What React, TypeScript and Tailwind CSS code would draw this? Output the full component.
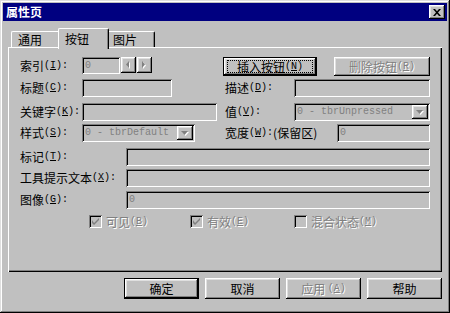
import React from "react";

const RAISED =
  "shadow-[inset_-1px_-1px_0_#000,inset_1px_1px_0_#fff,inset_-2px_-2px_0_#808080,inset_2px_2px_0_#dfdfdf]";
const SUNKEN =
  "shadow-[inset_1px_1px_0_#808080,inset_-1px_-1px_0_#fff,inset_2px_2px_0_#000,inset_-2px_-2px_0_#c0c0c0]";
const DIS = "text-[#808080] [text-shadow:1px_1px_0_#fff]";
const MONO = "font-['Liberation_Mono',monospace] text-[10px]";

function Lbl({ t, k, tail = ":", cls = "" }: { t: string; k: string; tail?: string; cls?: string }) {
  return (
    <span className={`whitespace-nowrap flex items-center ${cls}`}>
      <span>{t}</span>
      <span className={MONO}>
        (<u>{k}</u>){tail}
      </span>
    </span>
  );
}

function Field({ cls, value }: { cls: string; value?: string }) {
  return (
    <div className={`${cls} ${SUNKEN} bg-[#c0c0c0] flex items-center pl-[3px] shrink-0`}>
      {value && <span className={`${MONO} text-[#808080]`}>{value}</span>}
    </div>
  );
}

function DownArrow() {
  return (
    <svg width="8" height="5" viewBox="0 0 8 5">
      <polygon points="1,1 8,1 4.5,5" fill="#fff" />
      <polygon points="0,0 7,0 3.5,4" fill="#808080" />
    </svg>
  );
}

function Combo({ cls, value }: { cls: string; value: string }) {
  return (
    <div className={`${cls} h-[18px] ${SUNKEN} bg-[#c0c0c0] flex items-center pl-[3px] pr-[2px] shrink-0`}>
      <span className={`flex-1 ${MONO} text-[#808080]`}>{value}</span>
      <div className={`w-[16px] h-[14px] ${RAISED} bg-[#c0c0c0] flex items-center justify-center`}>
        <DownArrow />
      </div>
    </div>
  );
}

function Check({ checked }: { checked?: boolean }) {
  return (
    <div className={`w-[13px] h-[13px] ${SUNKEN} bg-[#c0c0c0] flex items-center justify-center shrink-0`}>
      {checked && (
        <svg width="7" height="7" viewBox="0 0 7 7">
          <path d="M0 2 L0 5 L2 7 L7 2 L7 0 L2 5 Z" fill="#808080" />
        </svg>
      )}
    </div>
  );
}

function Spin({ dir }: { dir: "l" | "r" }) {
  return (
    <div className={`w-[15px] h-[16px] ${RAISED} bg-[#c0c0c0] flex items-center justify-center`}>
      <svg width="5" height="8" viewBox="0 0 5 8">
        {dir === "l" ? (
          <>
            <polygon points="4,1 4,8 1,4.5" fill="#fff" />
            <polygon points="3,0 3,7 0,3.5" fill="#808080" />
          </>
        ) : (
          <>
            <polygon points="1,1 1,8 4,4.5" fill="#fff" />
            <polygon points="0,0 0,7 3,3.5" fill="#808080" />
          </>
        )}
      </svg>
    </div>
  );
}

export default function App() {
  return (
    <div
      className={`w-[450px] h-[313px] bg-[#c0c0c0] p-[3px] flex flex-col text-[12px] leading-none text-black font-['Noto_Sans_CJK_SC','Noto_Sans_CJK_JP',sans-serif] shadow-[inset_-1px_-1px_0_#000,inset_1px_1px_0_#dfdfdf,inset_-2px_-2px_0_#808080,inset_2px_2px_0_#fff]`}
    >
      {/* Title bar */}
      <div className="h-[18px] bg-[#000080] flex items-center pl-[3px] pr-[2px] shrink-0">
        <span className="text-white font-bold text-[12px]">属性页</span>
        <div className={`ml-auto w-[16px] h-[14px] ${RAISED} bg-[#c0c0c0] flex items-center justify-center`}>
          <svg width="8" height="7" viewBox="0 0 8 7">
            <path d="M0 0 L2 0 L4 2.2 L6 0 L8 0 L5 3.5 L8 7 L6 7 L4 4.8 L2 7 L0 7 L3 3.5 Z" fill="#000" />
          </svg>
        </div>
      </div>

      {/* Tabs + panel */}
      <div className="ml-[5px] w-[434px] flex flex-col shrink-0">
        <div className="h-[19px] mt-[7px] flex items-end pl-[3px]">
          <div className="w-[47px] h-[16px] border-l border-t border-white rounded-tl-[2px] flex items-center pl-[6px]">
            通用
          </div>
          <div className="relative z-10 w-[51px] h-[21px] -mb-[2px] bg-[#c0c0c0] border-l border-t border-white border-r border-r-black rounded-t-[2px] shadow-[inset_-1px_0_0_#808080] flex items-start pt-[4px] pl-[6px]">
            按钮
          </div>
          <div className="w-[46px] h-[16px] border-t border-white border-r border-r-black rounded-tr-[2px] shadow-[inset_-1px_0_0_#808080] flex items-center pl-[4px]">
            图片
          </div>
        </div>

        <div className="h-[225px] shadow-[inset_1px_1px_0_#fff,inset_-1px_-1px_0_#000,inset_-2px_-2px_0_#808080] flex flex-col pl-[12px] pt-[10px]">
          {/* Row 1 */}
          <div className="flex items-start h-[19px]">
            <div className="w-[62px] h-[17px] flex items-center">
              <Lbl t="索引" k="I" />
            </div>
            <Field cls="w-[38px] h-[17px]" value="0" />
            <div className="ml-[1px] flex gap-[1px]">
              <Spin dir="l" />
              <Spin dir="r" />
            </div>
            <div className="ml-[71px] w-[94px] h-[19px] border border-black relative">
              <div className={`w-full h-full ${RAISED} flex items-center justify-center`}>
                <Lbl t="插入按钮" k="N" tail="" />
              </div>
              <div className="absolute left-[3px] right-[3px] top-[2px] bottom-[2px] border border-dotted border-black" />
            </div>
            <div className={`ml-[17px] w-[96px] h-[19px] ${RAISED} flex items-center justify-center ${DIS}`}>
              <Lbl t="删除按钮" k="R" tail="" />
            </div>
          </div>

          {/* Row 2 */}
          <div className="flex items-center h-[18px] mt-[3px]">
            <div className="w-[62px]">
              <Lbl t="标题" k="C" />
            </div>
            <Field cls="w-[90px] h-[18px]" />
            <div className="ml-[53px] w-[69px]">
              <Lbl t="描述" k="D" />
            </div>
            <Field cls="w-[136px] h-[18px]" />
          </div>

          {/* Row 3 */}
          <div className="flex items-center h-[18px] mt-[6px]">
            <div className="w-[62px]">
              <Lbl t="关键字" k="K" />
            </div>
            <Field cls="w-[135px] h-[18px]" />
            <div className="ml-[8px] w-[69px]">
              <Lbl t="值" k="V" />
            </div>
            <Combo cls="w-[136px]" value="0 - tbrUnpressed" />
          </div>

          {/* Row 4 */}
          <div className="flex items-center h-[18px] mt-[3px]">
            <div className="w-[62px]">
              <Lbl t="样式" k="S" />
            </div>
            <Combo cls="w-[113px]" value="0 - tbrDefault" />
            <div className="ml-[30px] w-[112px] flex items-center">
              <Lbl t="宽度" k="W" />
              <span>(保留区)</span>
            </div>
            <Field cls="w-[93px] h-[18px]" value="0" />
          </div>

          {/* Row 5 */}
          <div className="flex items-center h-[18px] mt-[6px]">
            <div className="w-[106px]">
              <Lbl t="标记" k="T" />
            </div>
            <Field cls="w-[304px] h-[18px]" />
          </div>

          {/* Row 6 */}
          <div className="flex items-center h-[18px] mt-[3px]">
            <div className="w-[106px]">
              <Lbl t="工具提示文本" k="X" />
            </div>
            <Field cls="w-[304px] h-[18px]" />
          </div>

          {/* Row 7 */}
          <div className="flex items-center h-[18px] mt-[4px]">
            <div className="w-[106px]">
              <Lbl t="图像" k="G" />
            </div>
            <Field cls="w-[304px] h-[18px]" value="0" />
          </div>

          {/* Row 8 checkboxes */}
          <div className="flex items-center h-[13px] mt-[6px] pl-[69px]">
            <div className="w-[101px] flex items-center gap-[4px]">
              <Check checked />
              <span className={DIS}>
                <Lbl t="可见" k="B" tail="" />
              </span>
            </div>
            <div className="w-[104px] flex items-center gap-[4px]">
              <Check checked />
              <span className={DIS}>
                <Lbl t="有效" k="E" tail="" />
              </span>
            </div>
            <div className="flex items-center gap-[4px]">
              <Check />
              <span className={DIS}>
                <Lbl t="混合状态" k="M" tail="" />
              </span>
            </div>
          </div>
        </div>
      </div>

      {/* Bottom buttons */}
      <div className="ml-[5px] w-[434px] mt-[6px] flex justify-end gap-[6px]">
        <div className="w-[75px] h-[21px] border border-black">
          <div className={`w-full h-full ${RAISED} flex items-center justify-center`}>确定</div>
        </div>
        <div className={`w-[75px] h-[21px] ${RAISED} flex items-center justify-center`}>取消</div>
        <div className={`w-[75px] h-[21px] ${RAISED} flex items-center justify-center ${DIS}`}>
          <span>应用&nbsp;</span>
          <span className={MONO}>
            (<u>A</u>)
          </span>
        </div>
        <div className={`w-[75px] h-[21px] ${RAISED} flex items-center justify-center`}>帮助</div>
      </div>
    </div>
  );
}
